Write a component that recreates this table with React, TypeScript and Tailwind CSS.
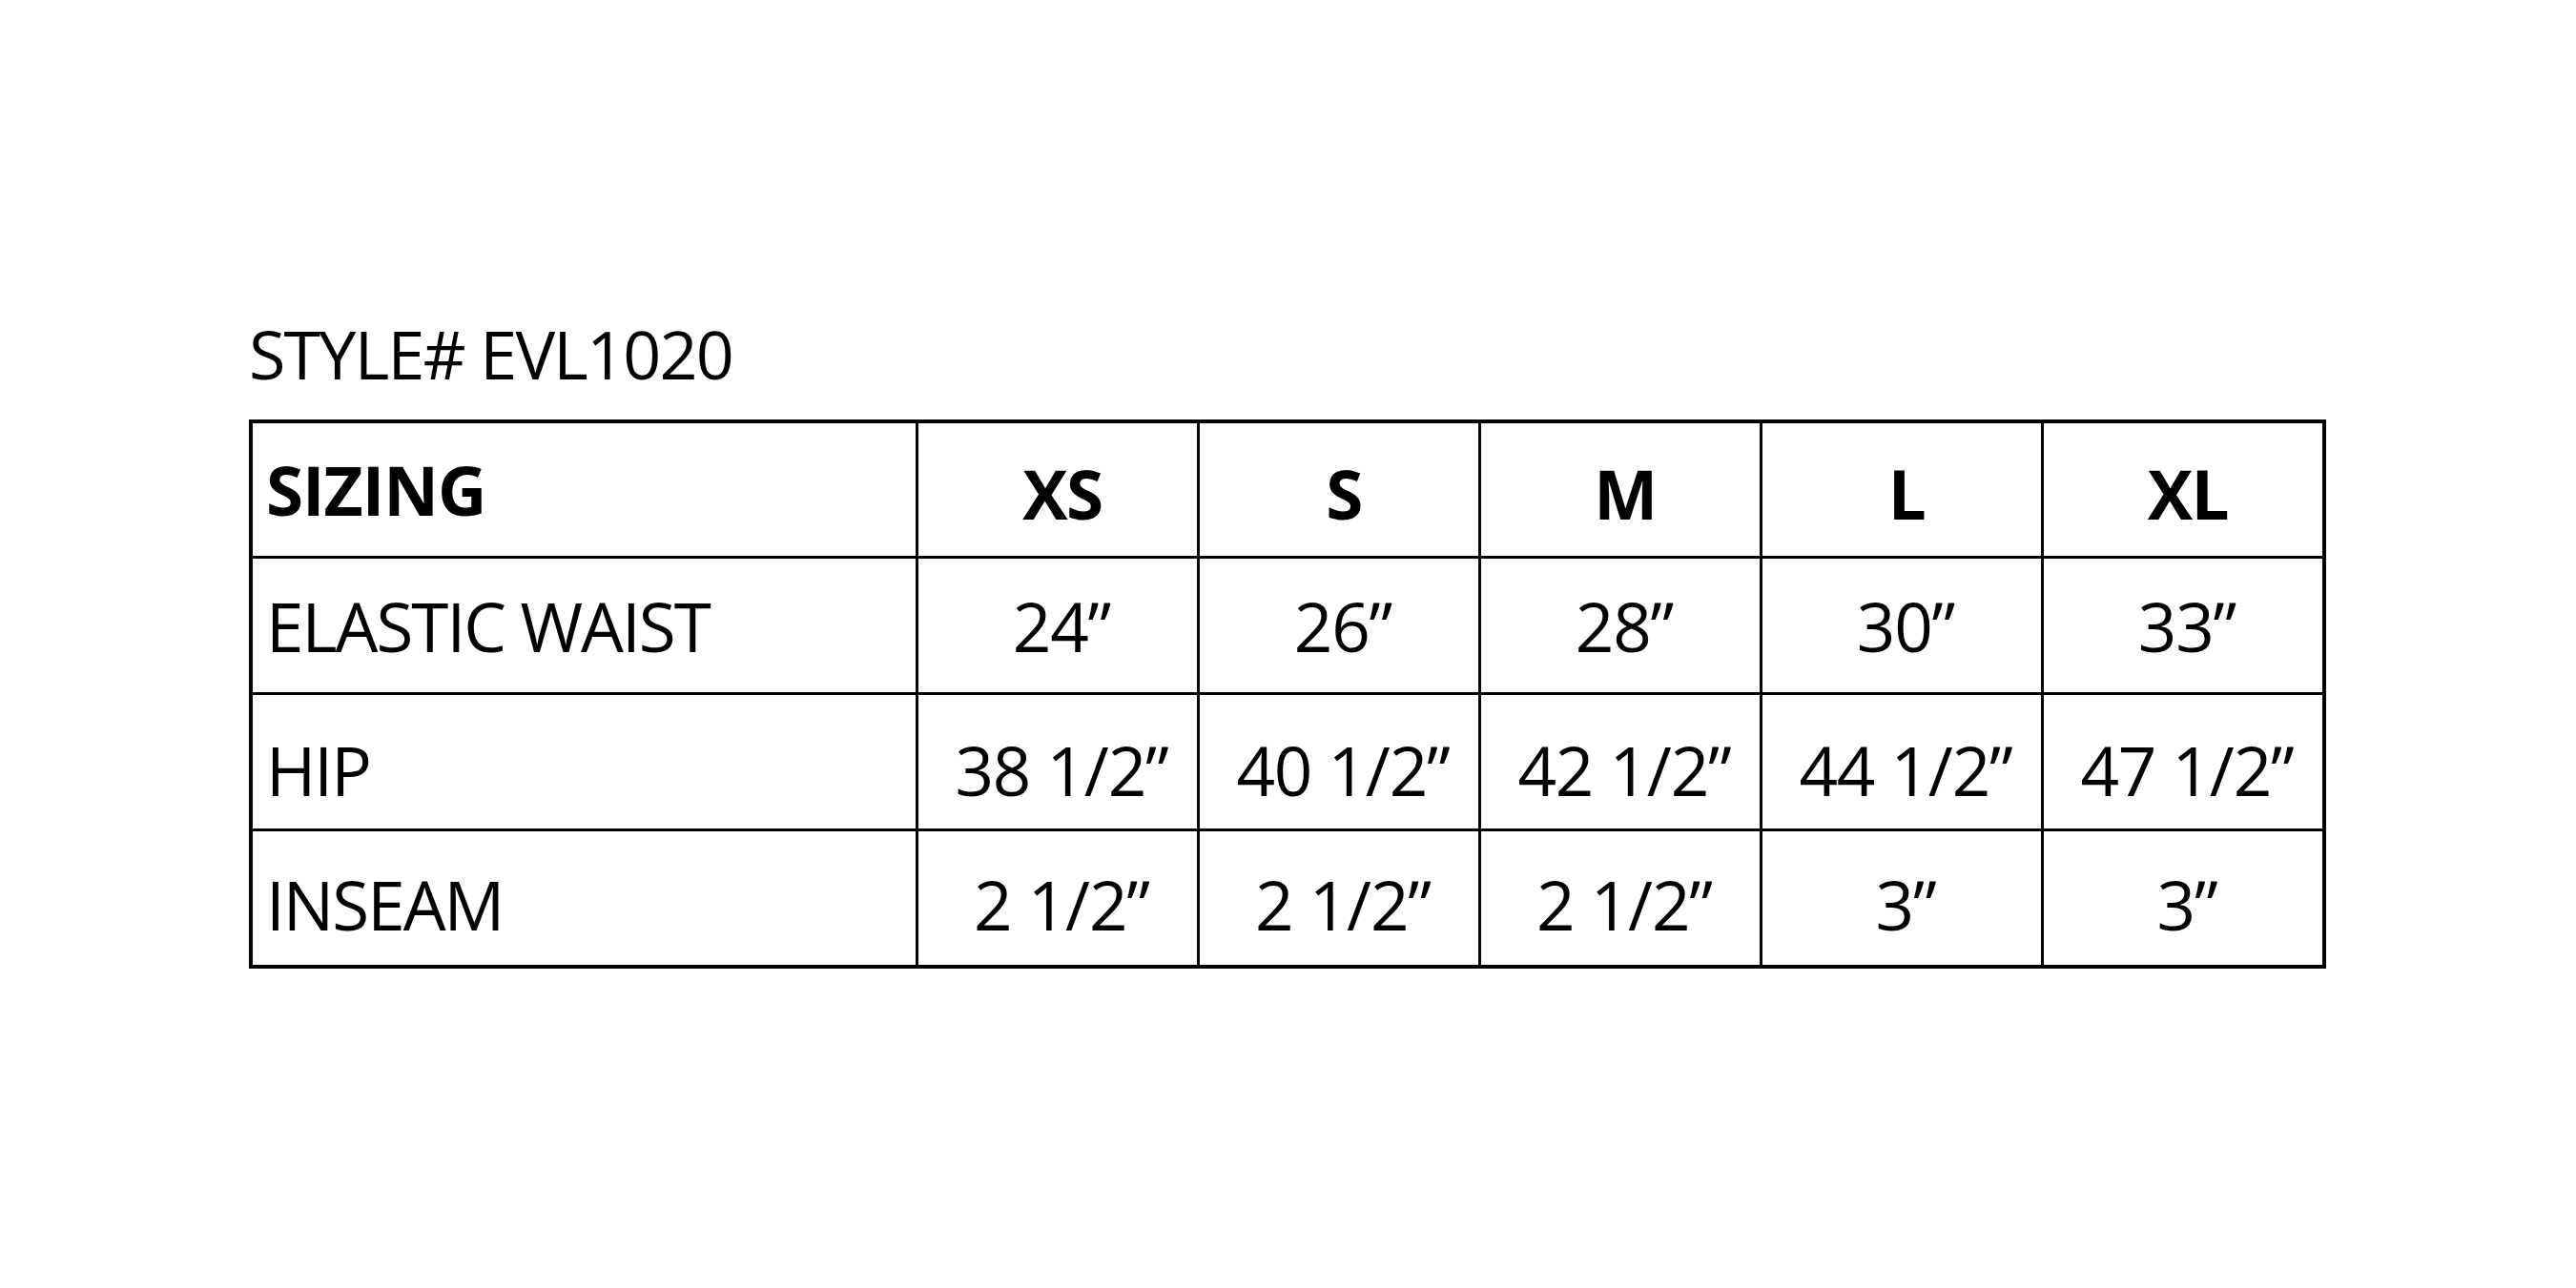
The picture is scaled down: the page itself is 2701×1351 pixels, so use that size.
const sizes = ['XS', 'S', 'M', 'L', 'XL']

const rows = [
  { label: 'ELASTIC WAIST', values: ['24”', '26”', '28”', '30”', '33”'], pad: 'pt-0', h: 'h-[143px]' },
  { label: 'HIP', values: ['38 1/2”', '40 1/2”', '42 1/2”', '44 1/2”', '47 1/2”'], pad: 'pt-4', h: 'h-[143px]' },
  { label: 'INSEAM', values: ['2 1/2”', '2 1/2”', '2 1/2”', '3”', '3”'], pad: 'pt-[13px]', h: 'h-[140px]' },
]

export default function App() {
  return (
    <div className="min-h-screen w-full bg-white pl-[261px] pt-[336px] text-black [font-family:'Open_Sans',sans-serif]">
      {/* Style number */}
      <div className="text-[70px] leading-none tracking-[-1.8px]">STYLE# EVL1020</div>

      {/* Size chart */}
      <div className="mt-[34px] w-[2178px] border-4 border-black">
        {/* Header row */}
        <div className="flex h-[142px] border-b-[3px] border-black">
          <div className="flex w-[698px] items-center border-r-[3px] border-black pl-3.5 text-[71px] font-bold leading-none tracking-[-1px]">
            SIZING
          </div>
          {sizes.map((s, i) => (
            <div
              key={s}
              className={
                'flex items-center justify-center pl-[10px] pt-[7px] text-[71px] font-bold leading-none tracking-[-1.5px] ' +
                (i < sizes.length - 1 ? 'w-[295px] border-r-[3px] border-black' : 'w-[292px]')
              }
            >
              {s}
            </div>
          ))}
        </div>

        {/* Measurement rows */}
        {rows.map((row, r) => (
          <div
            key={row.label}
            className={'flex ' + row.h + (r < rows.length - 1 ? ' border-b-[3px] border-black' : '')}
          >
            <div
              className={
                'flex w-[698px] items-center border-r-[3px] border-black pl-3.5 text-[71px] leading-none tracking-[-2px] ' +
                row.pad
              }
            >
              {row.label}
            </div>
            {row.values.map((v, i) => (
              <div
                key={i}
                className={
                  'flex items-center justify-center pl-2 text-[71px] leading-none tracking-[-1.2px] ' +
                  row.pad +
                  ' ' +
                  (i < row.values.length - 1 ? 'w-[295px] border-r-[3px] border-black' : 'w-[292px]')
                }
              >
                {v}
              </div>
            ))}
          </div>
        ))}
      </div>
    </div>
  )
}
